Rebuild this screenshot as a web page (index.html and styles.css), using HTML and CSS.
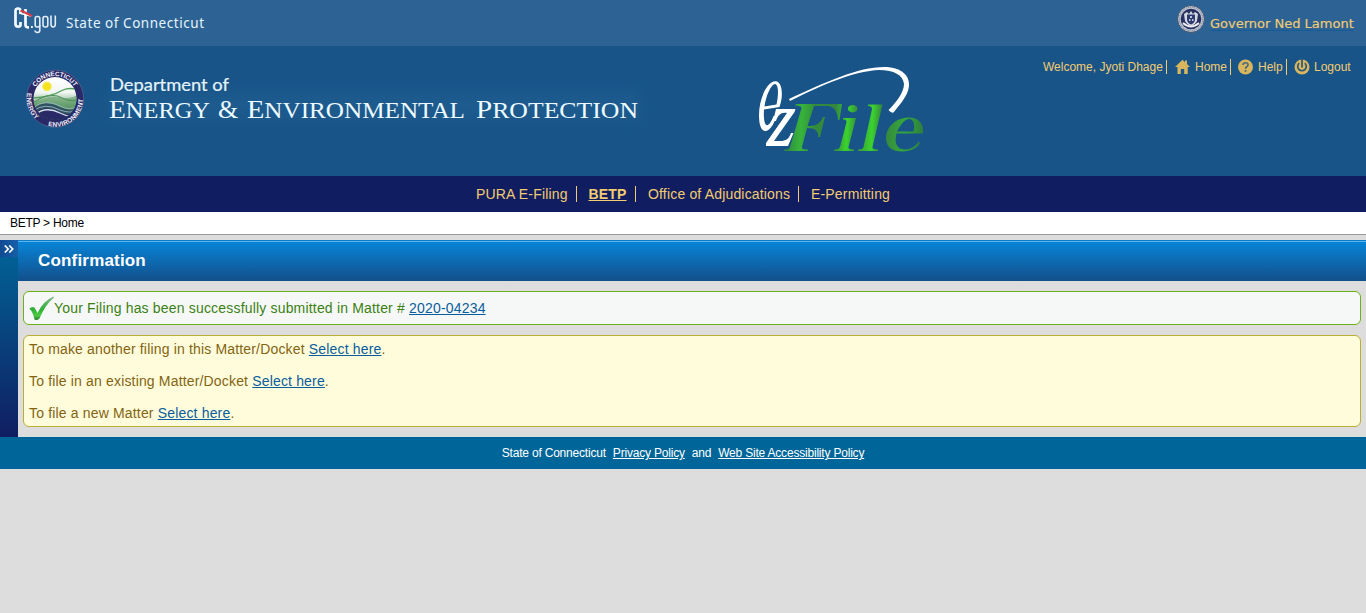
FILE: index.html
```html
<!DOCTYPE html>
<html lang="en">
<head>
<meta charset="utf-8">
<title>ezFile - Confirmation</title>
<link rel="stylesheet" href="styles.css">
</head>
<body>
<header>
  <div class="topbar">
    <svg class="ctgov" width="210" height="46" viewBox="0 0 210 46">
      <g fill="none" stroke="#f2fbff" stroke-width="2.7">
        <path d="M20.500 13V11Q20.500 8.500 18 8.500Q15.500 8.500 15.500 11V24Q15.500 26.700 18 26.700Q20.500 26.700 20.500 25V22"/>
        <path d="M25.500 9V25Q25.500 27.500 29 27.300"/>
      </g>
      <path d="M19 13L31 16" stroke="#fff" stroke-width="1.500"/>
      <path d="M20.500 10.500Q24 12 27 13.500L32 16" stroke="#d83c49" stroke-width="2" fill="none"/>
      <path d="M31 26h1.800v2H31z" fill="#f2fbff"/>
      <g fill="none" stroke="#e0eefa" stroke-width="1.600">
        <rect x="35.200" y="16.500" width="4.600" height="10.500" rx="2"/>
        <path d="M39.800 25V30Q39.800 32.500 37.500 32.500Q35.300 32.500 35 30.500"/>
        <rect x="43" y="16.500" width="4.800" height="10.500" rx="2"/>
        <path d="M51 15.500V24Q51 27 53.200 27Q55.300 27 55.300 24V15.500"/>
      </g>
      <text x="66" y="28" class="state" textLength="138">State of Connecticut</text>
    </svg>
    <div class="governor">
      <svg width="30" height="30" viewBox="0 0 30 30">
        <circle cx="15" cy="15" r="13.500" fill="#bcc4d2" stroke="#3e536f"/>
        <circle cx="15" cy="15" r="11.800" fill="none" stroke="#6f7890" stroke-width="1" stroke-dasharray="1 1"/>
        <circle cx="15" cy="15" r="10.300" fill="#29305f"/>
        <path d="M8 10L11 8L13 10L15 7L17 10L19 8L22 10L21 17Q19 21 15 22Q11 21 9 17Z" fill="#d4d9e2"/>
        <path d="M11 10.500H19V16Q18.500 19 15 20.500Q11.500 19 11 16Z" fill="#303a70"/>
        <path d="M14 12h2v2h-2zM13 15h1.500v2H13zM16 15h1.500v2H16z" fill="#bac3d4"/>
        <path d="M7 19Q15 26 23 19" stroke="#eef0f5" stroke-width="1.800" fill="none"/>
      </svg>
      <a>Governor Ned Lamont</a>
    </div>
  </div>
  <div class="banner">
    <svg class="brand" width="940" height="130" viewBox="0 46 940 130">
      <defs>
        <linearGradient id="sky" x1="0" y1="0" x2="0" y2="1"><stop offset="0" stop-color="#fff"/><stop offset=".35" stop-color="#f1f6f2"/><stop offset=".62" stop-color="#84b08b"/><stop offset=".85" stop-color="#2d643f"/></linearGradient>
        <linearGradient id="leaf" gradientUnits="userSpaceOnUse" x1="784" y1="133" x2="923" y2="140"><stop offset="0" stop-color="#2d8044"/><stop offset=".12" stop-color="#37b43b"/><stop offset=".22" stop-color="#338c3b"/><stop offset=".36" stop-color="#338440"/><stop offset=".45" stop-color="#3bd32f"/><stop offset=".52" stop-color="#368c3b"/><stop offset=".63" stop-color="#3bd32f"/><stop offset=".7" stop-color="#34803f"/><stop offset=".86" stop-color="#35a83c"/><stop offset="1" stop-color="#2e7e3d"/></linearGradient>
        <clipPath id="seal"><circle cx="55" cy="98.500" r="21.500"/></clipPath>
        <path id="arcTop" d="M32.500 98.500A22.500 22.500 0 0 1 77.500 98.500"/>
        <path id="arcLeft" d="M28.200 90A27.500 27.500 0 0 0 45 124.500"/>
        <path id="arcRight" d="M47 125.500A27.500 27.500 0 0 0 80.500 88"/>
        <filter id="soft" x="-10%" y="-100%" width="120%" height="300%"><feGaussianBlur stdDeviation="7"/></filter>
      </defs>
      <rect x="108" y="92" width="532" height="27" fill="#2c6da0" opacity=".3" filter="url(#soft)"/>
      <circle cx="55" cy="98.700" r="28.600" fill="#282966" stroke="#6c7ba2" stroke-width=".5"/>
      <g clip-path="url(#seal)">
        <rect x="33" y="77" width="44" height="44" fill="url(#sky)"/>
        <path d="M33 98Q51 97 63 90Q70 87 78 90" fill="none" stroke="#4d9c59" stroke-width="1.300"/>
        <path d="M33 104Q49 93 62 98Q71 99 78 95V112H33Z" fill="#53965b" opacity=".55"/>
        <path d="M33 103Q50 91 62 98Q70 102 78 100" fill="none" stroke="#51945c" stroke-width="1.200"/>
        <path d="M33 108Q45 99 60 107Q70 112 78 108V122H33Z" fill="#2f5260"/>
        <path d="M33 114Q45 104 60 112Q70 117 78 113V122H33Z" fill="#282966"/>
        <path d="M33 108Q45 98 60 106Q70 111 78 106M33 111Q45 102 60 110Q70 114 78 110" fill="none" stroke="#9cb4c0" stroke-width=".9"/>
        <path d="M36 114Q46 106 60 113Q66 116 72 117" fill="none" stroke="#d5dfea" stroke-width="1.300"/>
      </g>
      <circle cx="47" cy="86.500" r="4.500" fill="#f6e320" stroke="#f7ef88" stroke-width=".6"/>
      <g class="sealtext">
        <text><textPath href="#arcTop" startOffset="12" textLength="46">CONNECTICUT</textPath></text>
        <text><textPath href="#arcLeft" startOffset="3" textLength="29">ENERGY</textPath></text>
        <text><textPath href="#arcRight" startOffset="1" textLength="51">ENVIRONMENT</textPath></text>
      </g>
      <text x="110" y="91" class="dept" textLength="119" lengthAdjust="spacingAndGlyphs">Department of</text>
      <g class="agency"><text x="109" y="118" textLength="101" lengthAdjust="spacingAndGlyphs"><tspan class="cap">E</tspan>NERGY</text><text x="218" y="118" class="cap">&amp;</text><text x="247" y="118" textLength="218" lengthAdjust="spacingAndGlyphs"><tspan class="cap">E</tspan>NVIRONMENTAL</text><text x="476" y="118" textLength="162" lengthAdjust="spacingAndGlyphs"><tspan class="cap">P</tspan>ROTECTION</text></g>
      <path d="M789 99C826 82 858 67 884 67C903 67 910 77 909 86C908 96 900 104 894 112Q892 114 888.500 110C896 103 904 92 904 84C903 75 894 70 879 70C855 71 826 83 790 101Z" fill="#fff"/>
      <path fill-rule="evenodd" d="M764 109.500L779.500 107C783 98 783 84 777 81.500C768 79 759 98 759 115C759 127 762 131 765.500 131C769 131 774 125 776 117L773.500 116C771 123 768 126 766.500 125C764 124 763.500 116 764 109.500ZM764.500 106.500C766 95 771.500 84 775 84C779.500 85 778 98 776.500 104.500Z" fill="#fff"/>
      <path d="M776 109H795.500L794.500 112L774 141H780C786 141 789 139 791 133H793.500L788 146H766V143L787 113C781 112 778 115 776 121H773Z" fill="#fff"/>
      <g fill="url(#leaf)" fill-rule="evenodd">
        <path d="M796 104H842L839.500 120H838Q837 107 828 106H814L807.500 126Q819 127 823 117H825L820 137H818Q819 128 807 128L802 147Q801 149.500 808 149.500V151H784V149.500Q789 150 790 147L801.500 108Q802 106 795 105.500Z"/>
        <ellipse cx="852.700" cy="108.700" rx="4.800" ry="3.700"/>
        <path d="M843 118H856L848.500 147Q848 149.500 854 149.500V151H834V149.500Q839 149.500 840 147L846.500 122Q847 119.500 843 119.500Z"/>
        <path d="M868 104.500H882.500L872.500 147Q872 149.500 878 149.500V151H858V149.500Q863 149.500 863.500 147L872 109Q872 106 868 106Z"/>
        <path d="M923 133.500C924 123 918 117.500 909 117.500C896 117.500 886 127 886 138C886 147 892 151.500 902 151.500C911 151.500 918 148 920 142.500L918.500 142C914 148 909 149.500 904 149.500C897 149 894 143 896.500 133.500ZM897 131.500C901 124 905 119 909 119C914 119 915 125 913.500 131.500Z"/>
      </g>
    </svg>
    <div class="user">
      <span class="welcome">Welcome, Jyoti Dhage</span>
      <a class="u home"><svg width="16" height="16" viewBox="0 0 16 16"><path d="M7.500 .8L0 8H2.500V15H5.800V10H9.200V15H12.700V8H15L12 5V1.500H10V3.200Z" fill="#d9b55e"/></svg>Home</a>
      <a class="u help"><svg width="16" height="16" viewBox="0 0 16 16"><circle cx="7.500" cy="8" r="7.500" fill="#d9b55e"/><path d="M5 6Q5 3.700 7.500 3.700Q10.100 3.700 10.100 5.800Q10.100 7 8.500 8Q7.500 8.700 7.500 9.800" fill="none" stroke="#4b6a78" stroke-width="1.600"/><path d="M6.600 11h1.800v1.800H6.600z" fill="#4b6a78"/></svg>Help</a>
      <a class="u logout"><svg width="16" height="16" viewBox="0 0 16 16"><circle cx="8" cy="8" r="7.500" fill="#d9b55e"/><path d="M5.200 4.200A4.300 4.300 0 1 0 10.800 4.200M8 0V8.500" fill="none" stroke="#285780" stroke-width="1.700"/></svg>Logout</a>
    </div>
  </div>
</header>
<nav class="nav">
  <a class="pura">PURA E-Filing</a><a class="betp">BETP</a><a class="office">Office of Adjudications</a><a class="permit">E-Permitting</a>
</nav>
<div class="crumbs">BETP &gt; Home</div>
<div class="layout">
  <aside class="side"><div class="toggle"><svg width="10" height="8" viewBox="0 0 10 8"><path d="M.8.500L4.200 4L.8 7.500M5.300.500L8.700 4L5.300 7.500" fill="none" stroke="#fff" stroke-width="1.700"/></svg></div></aside>
  <main>
    <h1><span>Confirmation</span></h1>
    <div class="success">
      <svg width="25" height="26" viewBox="0 0 25 26"><defs><linearGradient id="tick" x1="0" y1="0" x2="0" y2="1"><stop offset="0" stop-color="#83b98a"/><stop offset=".55" stop-color="#2eae36"/><stop offset=".8" stop-color="#4ccb43"/><stop offset="1" stop-color="#2a7d2d"/></linearGradient></defs><path d="M.3 12.500Q3 10 5.500 11.500L8.500 17Q14 5 24.500 .5L25 1.500Q16 9 10.500 22.500Q8 25 5.500 23.500Q4 16 .3 12.500Z" fill="url(#tick)"/></svg><span>Your Filing has been successfully submitted in Matter # <a>2020-04234</a></span>
    </div>
    <div class="notice">
      <p>To make another filing in this Matter/Docket <a>Select here</a>.</p>
      <p>To file in an existing Matter/Docket <a>Select here</a>.</p>
      <p>To file a new Matter <a>Select here</a>.</p>
    </div>
  </main>
</div>
<footer><span>State of Connecticut</span><a>Privacy Policy</a><span>and</span><a>Web Site Accessibility Policy</a></footer>
</body>
</html>
```
FILE: styles.css
```css
* { box-sizing: border-box; }
body { margin: 0; background: #ddd; font-family: "Liberation Sans", Arial, sans-serif; font-size: 14px; }
svg { display: block; flex: none; }
.topbar { height: 46px; background: #2d6394; display: flex; justify-content: space-between; }
.state { font: 13.5px "Noto Sans", sans-serif; fill: #e4f3fc; }
.governor { display: flex; align-items: flex-start; padding: 4px 12px 0 0; }
.governor a { width: 144px; margin: 12px 0 0 4px; font: 13px/15px "DejaVu Sans", sans-serif; color: #f1cc75; border-bottom: 1px solid #145c98; height: 15px; white-space: nowrap; -webkit-text-stroke: .15px #f1cc75; }
.banner { height: 130px; background: #185488; display: flex; justify-content: space-between; }
.sealtext { font: bold 6.5px "Liberation Sans", sans-serif; fill: #f1f2fa; }
.dept { font: 17px Lato, sans-serif; fill: #e4f3f8; stroke: #e4f3f8; stroke-width: .2px; }
.agency { font: 23px "Liberation Serif", serif; fill: #edfaff; }
.cap { font-size: 26px; }
.user { display: flex; align-items: center; height: 16px; margin: 13px 15px 0 0; font-size: 12px; line-height: 14px; color: #f3cb70; white-space: nowrap; }
.u { display: flex; align-items: center; }
.welcome, .home, .help { border-right: 1px solid #f3cb70; }
.welcome { width: 124px; }
.home { width: 64px; padding-left: 8px; gap: 4px; }
.help { width: 56px; padding-left: 7px; gap: 4px; }
.logout { width: 64px; padding-left: 7px; gap: 4px; }
.nav { height: 36px; background: #101e61; display: flex; align-items: center; padding-left: 476px; color: #f3cb70; line-height: 16px; letter-spacing: .17px; white-space: nowrap; }
.nav a + a { border-left: 1px solid #f3cb70; padding-left: 12px; }
.nav .betp { width: 59px; padding-left: 11.5px; font-weight: bold; text-decoration: underline; }
.pura { width: 100px; }
.office { width: 163px; }
.crumbs { height: 23px; background: #fff; border-bottom: 1px solid #999; padding: 4px 10px 0; font-size: 12px; line-height: 14px; letter-spacing: -.27px; }
.layout { display: flex; height: 197px; margin-top: 5px; }
.side { width: 18px; flex: none; background: linear-gradient(#069, #101e61); }
.toggle { height: 17px; padding: 5px 0 0 4px; background: linear-gradient(90deg, #114a93, #165fa8); }
main { flex: 1; min-width: 0; letter-spacing: .18px; }
h1 { margin: 0; height: 41px; padding: 10px 20px 0; background: linear-gradient(#0885d8, #124f8b); border-top: 1px solid #0e7ecb; box-shadow: inset 0 1px #5bb4ee; color: #fff; font-size: 17px; line-height: 20px; }
.success { height: 34px; margin: 10px 5px 0; padding: 4px 5px; border: 1px solid #6eb01c; border-radius: 6px; background: #f6f8f8; color: #3b8112; display: flex; line-height: 24px; white-space: nowrap; }
.notice { height: 92px; margin: 10px 5px 0; padding: 5px; border: 1px solid #bcae35; border-radius: 6px; background: #fffcdc; color: #836410; letter-spacing: .165px; }
p { margin: 0 0 16px; line-height: 16px; }
main a { color: #095d9c; text-decoration: underline; }
footer { height: 32px; background: #069; color: #fff; display: flex; justify-content: center; gap: 7px; font-size: 12px; line-height: 32px; letter-spacing: -.2px; }
footer a { text-decoration: underline; }
```
